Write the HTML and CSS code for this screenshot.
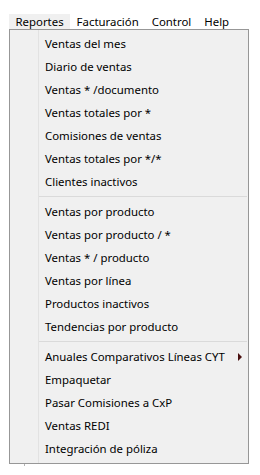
FILE: index.html
```html
<!DOCTYPE html>
<html lang="es">
<head>
<meta charset="utf-8">
<link rel="stylesheet" href="styles.css">
</head>
<body>
<div class="menubar">
  <span class="top active">Reportes</span><span class="top">Facturación</span><span class="top">Control</span><span class="top">Help</span>
</div>
<div class="menu">
  <div class="item">Ventas del mes</div>
  <div class="item">Diario de ventas</div>
  <div class="item">Ventas * /documento</div>
  <div class="item">Ventas totales por *</div>
  <div class="item">Comisiones de ventas</div>
  <div class="item">Ventas totales por */*</div>
  <div class="item">Clientes inactivos</div>
  <div class="sep"></div>
  <div class="item">Ventas por producto</div>
  <div class="item">Ventas por producto / *</div>
  <div class="item">Ventas * / producto</div>
  <div class="item">Ventas por línea</div>
  <div class="item">Productos inactivos</div>
  <div class="item">Tendencias por producto</div>
  <div class="sep"></div>
  <div class="item sub">Anuales Comparativos Líneas CYT<span class="arrow"></span></div>
  <div class="item">Empaquetar</div>
  <div class="item">Pasar Comisiones a CxP</div>
  <div class="item">Ventas REDI</div>
  <div class="item">Integración de póliza</div>
</div>
<div class="tick"></div>
</body>
</html>
```
FILE: styles.css
```css
html, body {
  margin: 0;
  padding: 0;
  background: #ffffff;
}
body {
  font-family: "Noto Sans", "Open Sans", sans-serif;
  font-size: 11.4px;
  color: #000;
  width: 260px;
  height: 475px;
}
.menubar {
  display: flex;
  padding: 14px 0 0 9px;
  height: 15px;
}
.top {
  padding: 0 6.5px;
  line-height: 15px;
  height: 15px;
  white-space: nowrap;
}
.top.active {
  background: #f0f0f0;
}
.menu {
  margin-left: 9px;
  width: 238px;
  border: 1px solid #979797;
  padding: 2px 0 3px 0;
  background:
    linear-gradient(to right, transparent 28px, #e2e2e2 28px, #e2e2e2 29px, transparent 29px),
    #f0f0f0;
}
.item {
  height: 23px;
  line-height: 23px;
  padding-left: 35px;
  white-space: nowrap;
  display: flex;
  align-items: center;
}
.sub {
  justify-content: space-between;
  padding-right: 6px;
}
.arrow {
  width: 0;
  height: 0;
  border-top: 4px solid transparent;
  border-bottom: 4px solid transparent;
  border-left: 4px solid #4a1010;
}
.sep {
  height: 7px;
  margin-left: 29px;
  margin-right: 1px;
  background: linear-gradient(to bottom, transparent 3px, #dadada 3px, #dadada 4px, transparent 4px);
}
.tick {
  margin-left: 24px;
  width: 1px;
  height: 2px;
  background: #b4b4b4;
}
```
